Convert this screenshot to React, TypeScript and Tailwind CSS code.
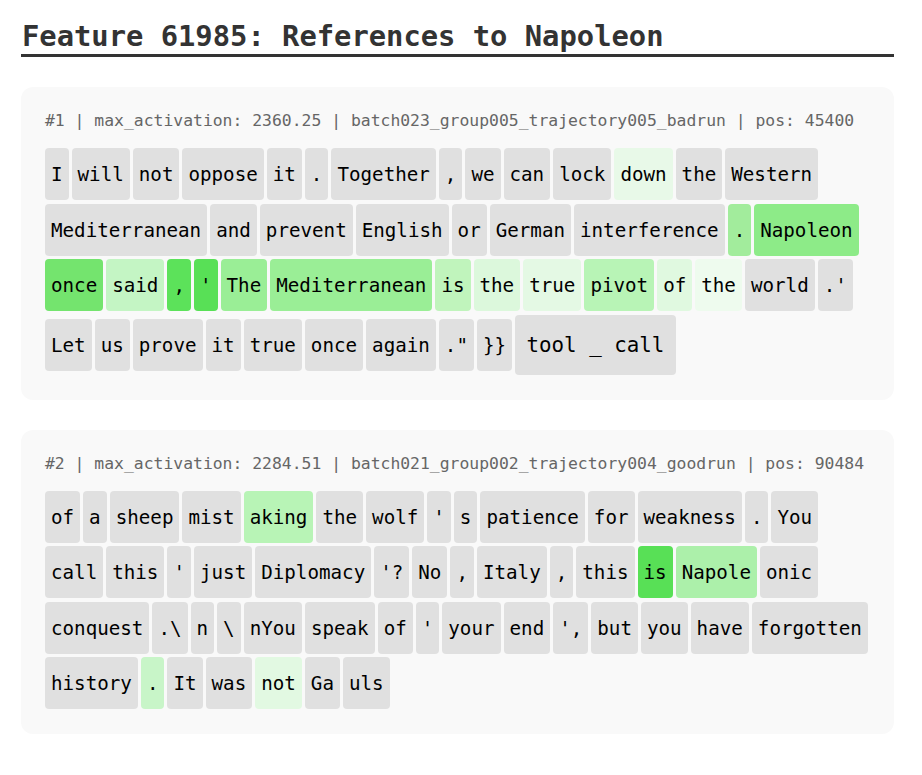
type Tok = { t: string; bg?: string; big?: boolean }

const GRAY = "#e0e0e0"

const examples: { meta: string; tokens: Tok[] }[] = [
  {
    meta: "#1 | max_activation: 2360.25 | batch023_group005_trajectory005_badrun | pos: 45400",
    tokens: [
      { t: "I" }, { t: "will" }, { t: "not" }, { t: "oppose" }, { t: "it" }, { t: "." },
      { t: "Together" }, { t: "," }, { t: "we" }, { t: "can" }, { t: "lock" },
      { t: "down", bg: "#e8f9e8" }, { t: "the" }, { t: "Western" },
      { t: "Mediterranean" }, { t: "and" }, { t: "prevent" }, { t: "English" }, { t: "or" },
      { t: "German" }, { t: "interference" }, { t: ".", bg: "#a2ec9c" }, { t: "Napoleon", bg: "#8deb88" },
      { t: "once", bg: "#74e46e" }, { t: "said", bg: "#c4f5c4" }, { t: ",", bg: "#5ce25a" },
      { t: "'", bg: "#58e056" }, { t: "The", bg: "#9aee96" }, { t: "Mediterranean", bg: "#9aee96" },
      { t: "is", bg: "#c0f4bc" }, { t: "the", bg: "#dcf8dc" }, { t: "true", bg: "#e4f9e4" },
      { t: "pivot", bg: "#b8f4b6" }, { t: "of", bg: "#e0f9e0" }, { t: "the", bg: "#eefbee" },
      { t: "world" }, { t: ".'" },
      { t: "Let" }, { t: "us" }, { t: "prove" }, { t: "it" }, { t: "true" }, { t: "once" },
      { t: "again" }, { t: ".\"" }, { t: "}}" }, { t: "tool _ call", big: true },
    ],
  },
  {
    meta: "#2 | max_activation: 2284.51 | batch021_group002_trajectory004_goodrun | pos: 90484",
    tokens: [
      { t: "of" }, { t: "a" }, { t: "sheep" }, { t: "mist" }, { t: "aking", bg: "#b8f4b6" },
      { t: "the" }, { t: "wolf" }, { t: "'" }, { t: "s" }, { t: "patience" }, { t: "for" },
      { t: "weakness" }, { t: "." }, { t: "You" },
      { t: "call" }, { t: "this" }, { t: "'" }, { t: "just" }, { t: "Diplomacy" }, { t: "'?" },
      { t: "No" }, { t: "," }, { t: "Italy" }, { t: "," }, { t: "this" }, { t: "is", bg: "#58e056" },
      { t: "Napole", bg: "#acf0aa" }, { t: "onic" },
      { t: "conquest" }, { t: ".\\" }, { t: "n" }, { t: "\\" }, { t: "nYou" }, { t: "speak" },
      { t: "of" }, { t: "'" }, { t: "your" }, { t: "end" }, { t: "'," }, { t: "but" }, { t: "you" },
      { t: "have" }, { t: "forgotten" },
      { t: "history" }, { t: ".", bg: "#c8f5c8" }, { t: "It" }, { t: "was" },
      { t: "not", bg: "#e2f9e2" }, { t: "Ga" }, { t: "uls" },
    ],
  },
]

function Token({ tok }: { tok: Tok }) {
  return (
    <span
      className={
        tok.big
          ? "inline-flex h-[60px] items-center rounded-[4px] px-[11.5px] pt-[3px] text-[20.8px] whitespace-pre text-black"
          : "inline-flex h-[52px] items-center rounded-[4px] px-[6px] pt-[3px] text-[19.2px] whitespace-pre text-black"
      }
      style={{ backgroundColor: tok.bg ?? GRAY }}
    >
      {tok.t}
    </span>
  )
}

export default function App() {
  return (
    <div className="min-h-screen bg-white pt-[18px] pr-[28px] pb-10 pl-[21px] font-['DejaVu_Sans_Mono',monospace]">
      {/* Title */}
      <h1 className="border-b-[3px] border-[#333333] pl-px text-[28.8px] leading-[36px] font-bold text-[#333333]">
        Feature 61985: References to Napoleon
      </h1>

      <div className="mt-[30px] flex flex-col gap-[30px]">
        {examples.map((ex, i) => (
          <div key={i} className="rounded-[12px] bg-[#f9f9f9] px-[24px] pt-[24px] pb-[25px]">
            <div className="mb-[17px] text-[16.4px] leading-[20px] whitespace-pre text-[#666666]">{ex.meta}</div>
            <div className="flex flex-wrap items-center gap-x-[3px] gap-y-[3.5px]">
              {ex.tokens.map((tok, j) => (
                <Token key={j} tok={tok} />
              ))}
            </div>
          </div>
        ))}
      </div>
    </div>
  )
}
